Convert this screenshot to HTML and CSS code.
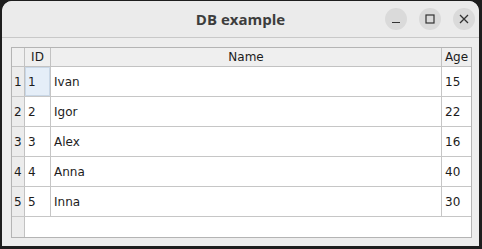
FILE: index.html
```html
<!DOCTYPE html>
<html lang="en">
<head>
    <meta charset="UTF-8">
    <title>DB example</title>
    <link rel="stylesheet" href="styles.css">
</head>
<body>
    <div class="window">
        <div class="titlebar">
            <div class="title">DB example</div>
            <div class="controls">
                <div class="ctl">
                    <svg width="10" height="10" viewBox="0 0 10 10"><path d="M1 8.5h8" stroke="#333" stroke-width="1.2"/></svg>
                </div>
                <div class="ctl">
                    <svg width="10" height="10" viewBox="0 0 10 10"><rect x="1" y="1" width="8" height="8" fill="none" stroke="#333" stroke-width="1.2"/></svg>
                </div>
                <div class="ctl">
                    <svg width="10" height="10" viewBox="0 0 10 10"><path d="M1 1l8 8M9 1l-8 8" stroke="#333" stroke-width="1.3"/></svg>
                </div>
            </div>
        </div>

        <div class="content">
            <div class="grid">
                <div class="row head">
                    <div class="vh"></div>
                    <div class="cell">ID</div>
                    <div class="cell">Name</div>
                    <div class="cell last">Age</div>
                </div>
                <div class="row">
                    <div class="vh">1</div>
                    <div class="cell current">1</div>
                    <div class="cell">Ivan</div>
                    <div class="cell last">15</div>
                </div>
                <div class="row">
                    <div class="vh">2</div>
                    <div class="cell">2</div>
                    <div class="cell">Igor</div>
                    <div class="cell last">22</div>
                </div>
                <div class="row">
                    <div class="vh">3</div>
                    <div class="cell">3</div>
                    <div class="cell">Alex</div>
                    <div class="cell last">16</div>
                </div>
                <div class="row">
                    <div class="vh">4</div>
                    <div class="cell">4</div>
                    <div class="cell">Anna</div>
                    <div class="cell last">40</div>
                </div>
                <div class="row">
                    <div class="vh">5</div>
                    <div class="cell">5</div>
                    <div class="cell">Inna</div>
                    <div class="cell last">30</div>
                </div>
                <div class="filler">
                    <div class="vh"></div>
                </div>
            </div>
        </div>
    </div>
</body>
</html>
```

FILE: styles.css
```css
* {
    box-sizing: border-box;
}
body {
    margin: 0;
    background: #1e1e1e;
    font-family: "DejaVu Sans", sans-serif;
}
.window {
    margin: 1px 3px 0 2px;
    height: 245px;
    background: #ededed;
    border-radius: 10px 10px 0 0;
    display: flex;
    flex-direction: column;
    overflow: hidden;
}
.titlebar {
    height: 37px;
    border-bottom: 1px solid #c8c8c8;
    background: #ebebeb;
    display: flex;
    align-items: center;
    justify-content: center;
    position: relative;
}
.title {
    font-family: "Open Sans", sans-serif;
    font-weight: 700;
    font-size: 15px;
    color: #3d3d3d;
}
.controls {
    position: absolute;
    right: 4px;
    top: 7px;
    display: flex;
    gap: 12px;
}
.ctl {
    width: 22px;
    height: 22px;
    border-radius: 50%;
    background: #dadada;
    display: flex;
    align-items: center;
    justify-content: center;
}
.content {
    flex: 1;
    padding: 9px 7px 8px 9px;
    display: flex;
}
.grid {
    flex: 1;
    border: 1px solid #b4b4b4;
    background: #fff;
    display: flex;
    flex-direction: column;
    font-size: 12px;
    color: #1c1c1c;
}
.row {
    display: grid;
    grid-template-columns: 13px 26px 391px 1fr;
    height: 30px;
    flex: none;
    border-bottom: 1px solid #c6c6c6;
}
.row.head {
    height: 19px;
    background: #efefef;
    border-bottom-color: #c2c2c2;
}
.cell {
    border-right: 1px solid #c6c6c6;
    display: flex;
    align-items: center;
    padding-left: 3px;
}
.cell.last {
    border-right: none;
}
.head .cell {
    justify-content: center;
    padding-left: 0;
    border-right-color: #c2c2c2;
}
.vh {
    background: #ececec;
    border-right: 1px solid #c2c2c2;
    display: flex;
    align-items: center;
    padding-left: 2px;
}
.head .vh {
    background: #efefef;
}
.current {
    background: #e5eef8;
    box-shadow: inset 0 0 0 1px #c9d7e6;
}
.filler {
    flex: 1;
    display: grid;
    grid-template-columns: 13px 1fr;
}
```
